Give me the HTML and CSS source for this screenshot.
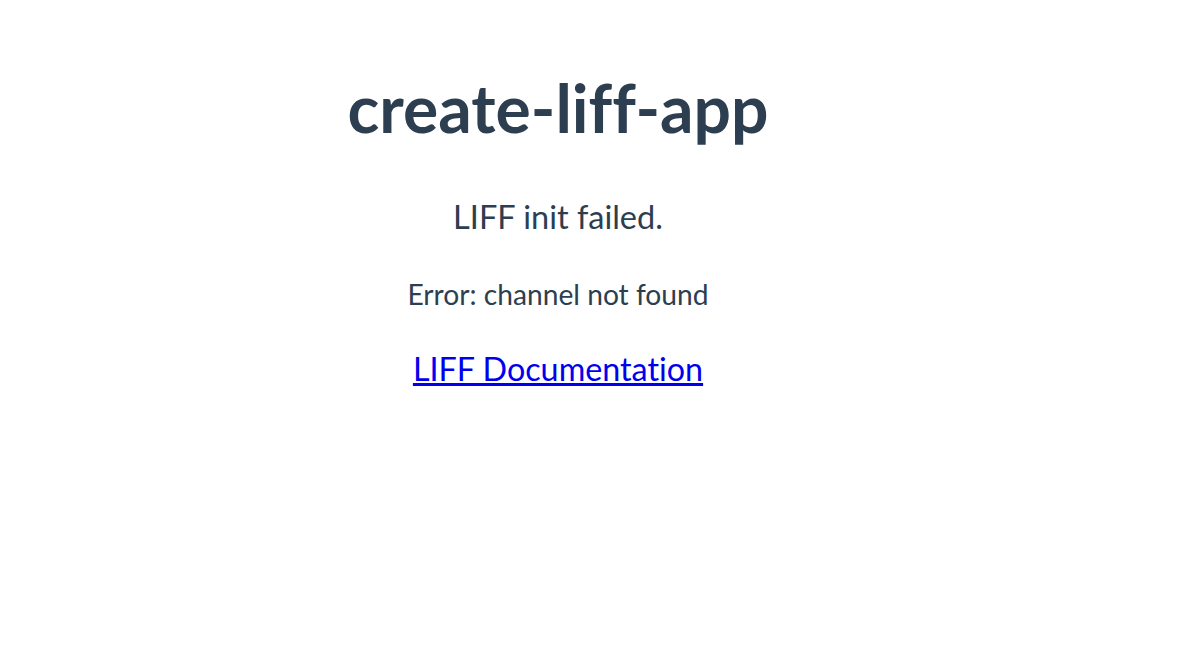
FILE: index.html
```html
<!DOCTYPE html>
<html lang="en">
<head>
  <meta charset="UTF-8">
  <meta name="viewport" content="width=device-width, initial-scale=1.0">
  <title>create-liff-app</title>
  <link rel="stylesheet" href="styles.css">
</head>
<body>
  <div id="app">
    <h1>create-liff-app</h1>
    <p class="message">LIFF init failed.</p>
    <p class="error"><code>Error: channel not found</code></p>
    <a class="doc-link" href="https://developers.line.biz/ja/docs/liff/" target="_blank" rel="noreferrer">LIFF Documentation</a>
  </div>
</body>
</html>
```

FILE: styles.css
```css
body {
  margin: 8px;
  font-family: Lato, "Noto Sans", Arial, sans-serif;
  font-variant-ligatures: none;
  color: #2c3e50;
  background: #fff;
}

#app {
  width: 1100px;
  text-align: center;
  padding-top: 60px;
}

h1 {
  font-size: 66px;
  font-weight: 700;
  line-height: 80px;
  margin: 0 0 49px;
}

.message {
  font-size: 32.5px;
  line-height: 40px;
  margin: 0 0 37px;
}

.error {
  margin: 0 0 35px;
}

.error code {
  font-family: Lato, "Noto Sans", Arial, sans-serif;
  font-size: 28.2px;
  line-height: 40px;
}

.doc-link {
  font-size: 32.3px;
  line-height: 40px;
  color: #0000ee;
}
```
